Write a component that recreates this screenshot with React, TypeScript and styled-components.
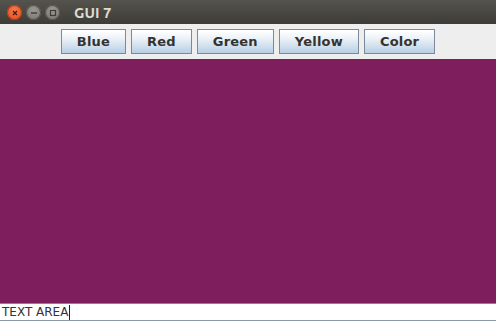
import React from "react";
import styled, { createGlobalStyle } from "styled-components";

const Global = createGlobalStyle`
  html, body {
    margin: 0;
    padding: 0;
    height: 100%;
    overflow: hidden;
  }
  #root {
    height: 100%;
  }
`;

const Frame = styled.div`
  display: flex;
  flex-direction: column;
  width: 496px;
  height: 321px;
  font-family: "DejaVu Sans", sans-serif;
`;

const TitleBar = styled.div`
  height: 24px;
  flex: none;
  display: flex;
  align-items: center;
  padding-left: 7px;
  background: linear-gradient(#55534d, #3d3c38);
`;

const Controls = styled.div`
  display: flex;
  gap: 4px;
  align-items: center;
  margin-top: 1px;
`;

const WinButton = styled.div<{ close?: boolean }>`
  width: 15px;
  height: 15px;
  border-radius: 50%;
  display: flex;
  align-items: center;
  justify-content: center;
  background: ${p =>
    p.close
      ? "radial-gradient(circle at 50% 35%, #f47a4f, #e0481a)"
      : "radial-gradient(circle at 50% 35%, #9b9893, #74726d)"};
  box-shadow: inset 0 0 0 1px ${p => (p.close ? "#b63d14" : "#55534e")};
`;

const Title = styled.div`
  margin-left: 14px;
  color: #dfdbd2;
  font-weight: bold;
  font-size: 15px;
  font-family: "Ubuntu", "DejaVu Sans", sans-serif;
`;

const Toolbar = styled.div`
  flex: none;
  display: flex;
  justify-content: center;
  gap: 5px;
  padding: 5px 0;
  background: #eeeeee;
`;

const Button = styled.button`
  height: 25px;
  box-sizing: border-box;
  padding: 0 15px;
  border: 1px solid #7a8a99;
  border-radius: 0;
  background: linear-gradient(#ffffff 0%, #f1f5f9 30%, #b8cfe5 100%);
  font-family: "DejaVu Sans", sans-serif;
  font-weight: bold;
  font-size: 13px;
  letter-spacing: 0.2px;
  color: #333333;
`;

const Canvas = styled.div<{ bg: string }>`
  flex: 1;
  background: ${p => p.bg};
`;

const TextArea = styled.div`
  flex: none;
  height: 18px;
  box-sizing: border-box;
  border-top: 1px solid #7a8a99;
  border-bottom: 1px solid #8a97a5;
  background: #ffffff;
  display: flex;
  align-items: center;
  padding-left: 2px;
  font-family: "DejaVu Sans", sans-serif;
  font-size: 12px;
  color: #333333;
`;

const Caret = styled.span`
  display: inline-block;
  width: 1px;
  height: 15px;
  background: #222;
  margin-left: 1px;
`;

const Close = () => (
  <svg width="8" height="8" viewBox="0 0 8 8">
    <path d="M2 2 L6 6 M6 2 L2 6" stroke="#4a1a0a" strokeWidth="1.3" />
  </svg>
);

const Minimize = () => (
  <svg width="8" height="8" viewBox="0 0 8 8">
    <path d="M1 4 H7" stroke="#3c3b37" strokeWidth="1.4" />
  </svg>
);

const Maximize = () => (
  <svg width="8" height="8" viewBox="0 0 8 8">
    <rect x="1.5" y="1.5" width="5" height="5" fill="none" stroke="#3c3b37" strokeWidth="1.2" />
  </svg>
);

const labels = ["Blue", "Red", "Green", "Yellow", "Color"];

export default function App() {
  return (
    <>
      <Global />
      <Frame>
        <TitleBar>
          <Controls>
            <WinButton close>
              <Close />
            </WinButton>
            <WinButton>
              <Minimize />
            </WinButton>
            <WinButton>
              <Maximize />
            </WinButton>
          </Controls>
          <Title>GUI 7</Title>
        </TitleBar>
        <Toolbar>
          {labels.map(l => (
            <Button key={l}>{l}</Button>
          ))}
        </Toolbar>
        <Canvas bg="#7e1e5d" />
        <TextArea>
          TEXT AREA
          <Caret />
        </TextArea>
      </Frame>
    </>
  );
}
